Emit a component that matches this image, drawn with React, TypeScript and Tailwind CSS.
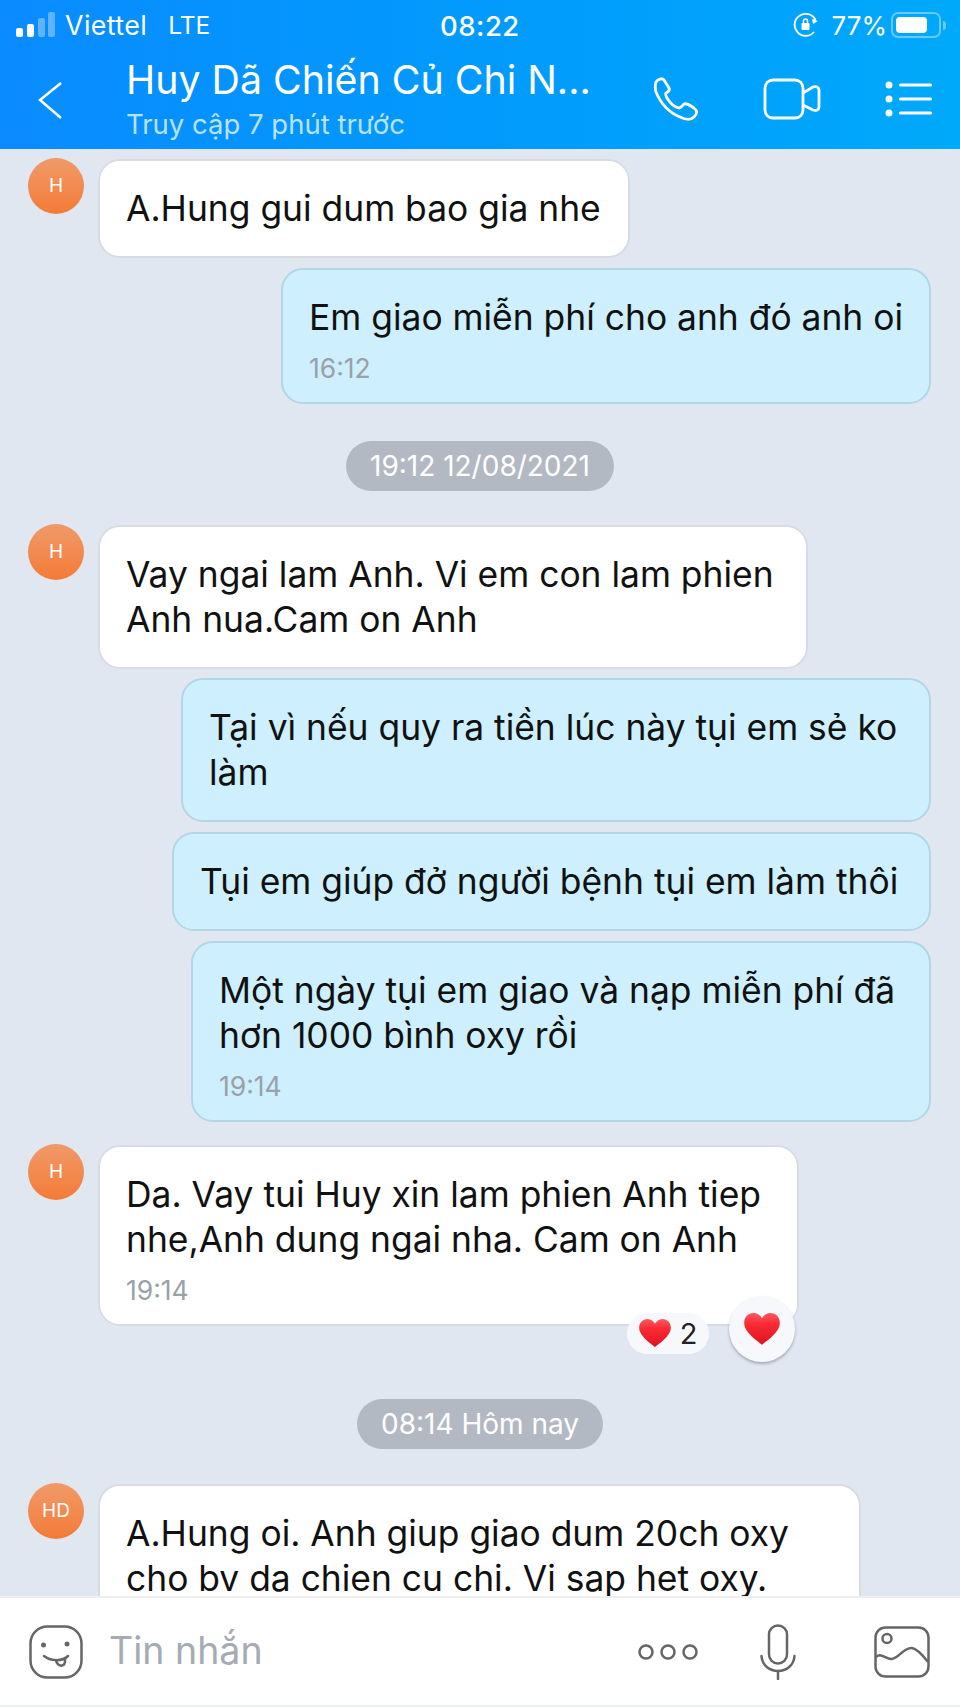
const font = { fontFamily: 'Inter, "Noto Sans", sans-serif' }

function Avatar({ label }: { label: string }) {
  return (
    <div className="w-[56px] h-[56px] mt-[-1px] shrink-0 rounded-full bg-gradient-to-b from-[#f09a68] to-[#f47a35] flex items-center justify-center text-white text-[19px]">
      {label}
    </div>
  )
}

function Time({ children }: { children: string }) {
  return <div className="mt-[10px] mb-[-9px] text-[26.500px] leading-[36px] text-[#9aa1a8]">{children}</div>
}

interface BubbleProps {
  lines: string[]
  time?: string
  mb: string
  w: string
  children?: React.ReactNode
}

function Incoming({ label, lines, time, mb, w, children }: BubbleProps & { label: string }) {
  return (
    <div className={`flex pl-[28px] gap-[14px] ${mb}`}>
      <Avatar label={label} />
      <div className={`relative shrink-0 bg-white border-2 border-[#d8dce2] rounded-[22px] pl-[26px] pt-[25px] pb-[25px] text-[35.400px] leading-[45px] text-[#111] ${w}`}>
        {lines.map((l) => (
          <div key={l} className="whitespace-nowrap">{l}</div>
        ))}
        {time && <Time>{time}</Time>}
        {children}
      </div>
    </div>
  )
}

function Outgoing({ lines, time, mb, w }: BubbleProps) {
  return (
    <div className={`flex justify-end pr-[29px] ${mb}`}>
      <div className={`bg-[#cdeffe] border-2 border-[#b3d6e6] rounded-[22px] pl-[26px] pt-[25px] pb-[25px] text-[35.400px] leading-[45px] text-[#111] ${w}`}>
        {lines.map((l) => (
          <div key={l} className="whitespace-nowrap">{l}</div>
        ))}
        {time && <Time>{time}</Time>}
      </div>
    </div>
  )
}

function Pill({ children, mb }: { children: string; mb: string }) {
  return (
    <div className={`flex justify-center ${mb}`}>
      <div className="h-[50px] px-[24px] rounded-full bg-[#b3b9c2] text-white text-[28px] flex items-center">{children}</div>
    </div>
  )
}

function Heart({ w }: { w: number }) {
  return (
    <svg width={w} height={w * 0.88} viewBox="0 0 36 32">
      <defs>
        <linearGradient id="heart" x1="0" y1="0" x2="0" y2="1">
          <stop offset="0" stopColor="#ff5a5f" />
          <stop offset="0.35" stopColor="#fb2a35" />
          <stop offset="1" stopColor="#dd1320" />
        </linearGradient>
      </defs>
      <path
        d="M18 32C15 29 0 20 0 10 0 4 4 0 9.500 0 13.500 0 16.500 2.500 18 5.500 19.500 2.500 22.500 0 26.500 0 32 0 36 4 36 10 36 20 21 29 18 32Z"
        fill="url(#heart)"
      />
    </svg>
  )
}

export default function App() {
  return (
    <div style={font} className="w-[960px] h-[1707px] overflow-hidden flex flex-col bg-[#e1e7f0]">
      <header className="h-[149px] shrink-0 bg-gradient-to-r from-[#0a8bff] to-[#00a9fa] text-white px-[15px]">
        <div className="relative h-[50px] flex items-center">
          <svg width="40" height="26" viewBox="0 0 40 26" className="mt-[-1px]" fill="white">
            <rect x="1" y="16" width="7" height="9" rx="2" />
            <rect x="12" y="12" width="7" height="13" rx="2" />
            <rect x="23" y="6" width="7" height="19" rx="2" fillOpacity="0.35" />
            <rect x="33" y="0" width="7" height="25" rx="2" fillOpacity="0.35" />
          </svg>
          <span className="ml-[10px] text-[26.800px] tracking-[0.4px]">Viettel</span>
          <span className="ml-[21px] text-[24.500px]">LTE</span>
          <span className="absolute left-[425px] top-[6px] text-[27.500px] font-medium tracking-[0.5px]">08:22</span>
          <div className="ml-auto mr-[-1px] flex items-center">
            <svg width="26" height="26" viewBox="0 0 26 26" fill="none" stroke="white" strokeWidth="1.800" className="mr-[13px]">
              <path d="M21 20A11 11 0 1 1 22.500 8" />
              <path d="M25 9l-5 3-1-5z" fill="white" stroke="none" />
              <rect x="8.500" y="11" width="8" height="7" rx="1" fill="white" stroke="none" />
              <path d="M10.500 11V9a2 2 0 0 1 4 0v2" strokeWidth="1.500" />
            </svg>
            <span className="text-[26px] mr-[4px]">77%</span>
            <div className="w-[50px] h-[26px] rounded-[7px] border-2 border-white/40 p-[3px]">
              <div className="h-full w-[77%] rounded-[4px] bg-white" />
            </div>
            <div className="ml-[2px] w-[3px] h-[9px] rounded-r bg-white/40" />
          </div>
        </div>
        <div className="flex h-[99px]">
          <svg width="28" height="40" viewBox="0 0 28 40" fill="none" stroke="white" strokeWidth="2.500" className="ml-[22px] mt-[31px] shrink-0">
            <path d="M24 2 L3 19 L24 37" />
          </svg>
          <div className="ml-[61px] w-[530px]">
            <div className="text-[39.300px] leading-[46px] mt-[7px] whitespace-nowrap">Huy Dã Chiến Củ Chi N...</div>
            <div className="text-[27.500px] leading-[34px] mt-[4px] text-[#b8e3ff]">Truy cập 7 phút trước</div>
          </div>
          <svg width="46" height="44" viewBox="0 0 46 44" fill="none" stroke="white" strokeWidth="2.800" strokeLinejoin="round" className="ml-[-3px] mt-[27px] shrink-0">
            <path d="M3 5C5 2 9 1 11 3L16 11C17 13 15 15 13 16 12 17 13 19 14 21 17 26 21 30 26 31 28 31 30 28 31 27 33 26 35 27 41 31 45 34 44 37 41 40 38 43 33 43 27 40 17 36 8 27 3 15 2 11 2 8 3 5Z" />
          </svg>
          <svg width="58" height="42" viewBox="0 0 58 42" fill="none" stroke="white" strokeWidth="2.800" strokeLinejoin="round" className="ml-[64px] mt-[28px] shrink-0">
            <rect x="2" y="2" width="38" height="38" rx="8" />
            <path d="M40 15 L50 9C53 8 56 9 56 12V29C56 32 53 33 50 32L40 27" />
          </svg>
          <svg width="48" height="36" viewBox="0 0 48 36" fill="white" className="ml-[63px] mt-[31px] shrink-0">
            <circle cx="5" cy="4" r="3.500" />
            <circle cx="5" cy="18" r="3.500" />
            <circle cx="5" cy="32" r="3.500" />
            <rect x="15" y="2.500" width="33" height="3" rx="1.500" />
            <rect x="15" y="16.500" width="33" height="3" rx="1.500" />
            <rect x="15" y="30.500" width="33" height="3" rx="1.500" />
          </svg>
        </div>
      </header>

      <main className="flex-1 overflow-hidden pt-[10px]">
        <Incoming label="H" lines={['A.Hung gui dum bao gia nhe']} w="w-[532px]" mb="mb-[10px]" />
        <Outgoing lines={['Em giao miễn phí cho anh đó anh oi']} time="16:12" w="w-[650px]" mb="mb-[37px]" />
        <Pill mb="mb-[34px]">19:12 12/08/2021</Pill>
        <Incoming label="H" lines={['Vay ngai lam Anh. Vi em con lam phien', 'Anh nua.Cam on Anh']} w="w-[710px]" mb="mb-[9px]" />
        <Outgoing lines={['Tại vì nếu quy ra tiền lúc này tụi em sẻ ko', 'làm']} w="w-[750px]" mb="mb-[10px]" />
        <Outgoing lines={['Tụi em giúp đở người bệnh tụi em làm thôi']} w="w-[759px]" mb="mb-[10px]" />
        <Outgoing lines={['Một ngày tụi em giao và nạp miễn phí đã', 'hơn 1000 bình oxy rồi']} time="19:14" w="w-[740px]" mb="mb-[23px]" />
        <Incoming label="H" lines={['Da. Vay tui Huy xin lam phien Anh tiep', 'nhe,Anh dung ngai nha. Cam on Anh']} time="19:14" w="w-[701px]" mb="mb-[73px]">
          <div className="absolute left-[527px] bottom-[-30px] h-[41px] w-[82px] rounded-full bg-[#f6f8fc] flex items-center justify-center gap-[9px] text-[29px] text-[#222]">
            <Heart w={32} />
            <span>2</span>
          </div>
          <div className="absolute right-[2px] bottom-[-38px] w-[66px] h-[66px] rounded-full bg-[#f6f8fc] shadow-[0_2px_3px_rgba(90,100,120,0.45)] flex items-center justify-center">
            <Heart w={36} />
          </div>
        </Incoming>
        <Pill mb="mb-[35px]">08:14 Hôm nay</Pill>
        <Incoming label="HD" lines={['A.Hung oi. Anh giup giao dum 20ch oxy', 'cho bv da chien cu chi. Vi sap het oxy.', ' ']} w="w-[763px]" mb="mb-0" />
      </main>

      <footer className="h-[111px] shrink-0 bg-white border-t-2 border-b-2 border-[#eeeff1] flex items-center pl-[29px] pr-[30px] text-[#666]">
        <svg width="54" height="54" viewBox="0 0 54 54" fill="none" stroke="#666" strokeWidth="2.500" strokeLinecap="round" className="shrink-0">
          <rect x="1.500" y="1.500" width="51" height="51" rx="17" />
          <circle cx="14.500" cy="20" r="2.500" fill="#666" stroke="none" />
          <circle cx="38" cy="19" r="2.500" fill="#666" stroke="none" />
          <path d="M15 31C21 36 33 37 39 31" />
          <path d="M27 35C28 41 35 43 36 37L36 33" />
        </svg>
        <span className="ml-[26px] text-[37.500px] text-[#a4abb3]">Tin nhắn</span>
        <svg width="60" height="20" viewBox="0 0 60 20" fill="none" stroke="#666" strokeWidth="2.500" className="ml-auto shrink-0">
          <circle cx="8" cy="10" r="6.500" />
          <circle cx="30" cy="10" r="6.500" />
          <circle cx="52" cy="10" r="6.500" />
        </svg>
        <svg width="36" height="56" viewBox="0 0 36 56" fill="none" stroke="#666" strokeWidth="2.500" strokeLinecap="round" className="ml-[62px] shrink-0">
          <rect x="9" y="1.500" width="18" height="38" rx="9" />
          <path d="M1.500 32C3 52 33 52 34.500 32" />
          <path d="M18 47V55" />
        </svg>
        <svg width="56" height="52" viewBox="0 0 56 52" fill="none" stroke="#666" strokeWidth="2.500" className="ml-[78px] shrink-0">
          <rect x="1.500" y="1.500" width="53" height="49" rx="10" />
          <circle cx="13" cy="12.500" r="4.500" />
          <path d="M2 31C8 26 12 34 18 33 25 32 30 21 38 22 44 23 50 31 54 36" />
        </svg>
      </footer>
    </div>
  )
}
